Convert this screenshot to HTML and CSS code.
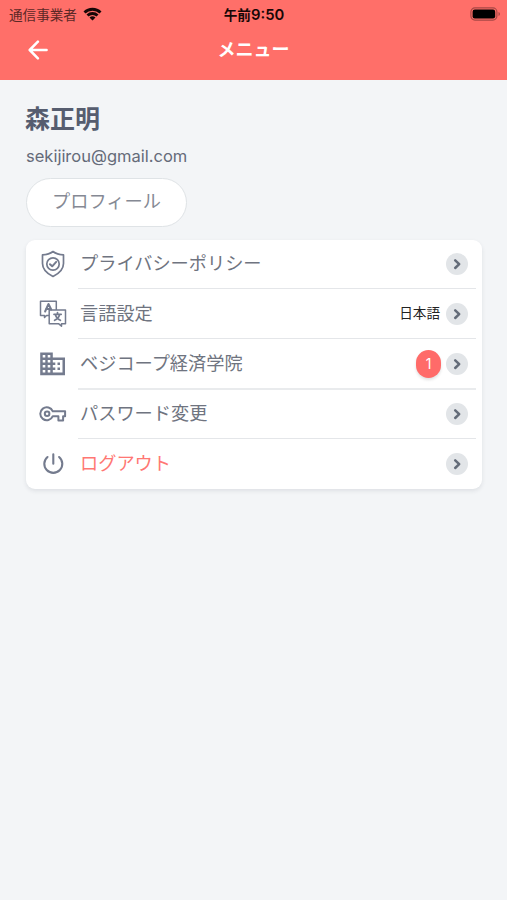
FILE: index.html
```html
<!DOCTYPE html>
<html lang="ja">
<head>
<meta charset="utf-8">
<title>メニュー</title>
<link rel="stylesheet" href="styles.css">
</head>
<body>
<header class="header">
  <div class="status">
    <div class="carrier"><span>通信事業者</span>
      <svg class="wifi" viewBox="0 0 19 14"><path d="M.5 4.400a12.800 12.800 0 0 1 18 0l-2 2.200a9.900 9.900 0 0 0-14 0zM3.500 7.500a8.500 8.500 0 0 1 12 0l-2 2.100a5.700 5.700 0 0 0-8 0zM6.500 10.600a4.300 4.300 0 0 1 6 0l-3 3z"/></svg>
    </div>
    <div class="time">午前<span class="digits">9:50</span></div>
    <svg class="battery" viewBox="0 0 31 14"><rect x=".9" y=".9" width="26" height="12.2" rx="4" fill="none" stroke="#a84845" stroke-width="1.2"/><rect x="2.6" y="2.6" width="22.6" height="8.8" rx="2.2"/><path d="M28.5 5v4c2-.8 2-3.2 0-4z" fill="#a84845"/></svg>
  </div>
  <div class="bar">
    <svg class="back" viewBox="0 0 20 20"><path d="M18.600 10H2M9.900 1.700 1.700 10l8.200 8.300"/></svg>
    <h1 class="title">メニュー</h1>
  </div>
</header>
<main class="main">
  <h2 class="name">森正明</h2>
  <p class="email">sekijirou@gmail.com</p>
  <button class="profile">プロフィール</button>
  <ul class="menu">
    <li class="item">
      <svg class="icon" viewBox="0 0 28 28" stroke-width="1.700"><path d="M14 1.500c3 2.300 6.500 3.200 10.500 3.400v8.600c0 6-4.400 10-10.500 13-6.100-3-10.500-7-10.500-13V4.900C7.500 4.700 11 3.800 14 1.500z"/><circle cx="14" cy="14" r="6.200"/><path d="m11 14.200 2.200 2.100 4-4.400" stroke-width="2"/></svg>
      <div class="row"><span class="label">プライバシーポリシー</span><span class="chevron"><svg viewBox="0 0 22 22"><path d="m9.200 7.400 4 3.800-4 3.800"/></svg></span></div>
    </li>
    <li class="item">
      <svg class="icon" viewBox="0 0 28 28" stroke-width="1.500"><path d="M10 15.500H7.500l-2 2v-2H1.500V1.200h15.800v8.700M10.200 9.900h16.300v13.800h-4v2.500l-3-2.500h-9.300z"/><path d="m6.100 11.500 3.400-7.500 2.700 5.500M7 9h4.500" stroke-width="2"/><path d="M15 14.300h7.200M18.500 12.500v2M20.600 14.500c-.7 3-2.600 4.800-5 5.800M16.400 14.500c.7 3 2.600 4.800 5 5.800" stroke-width="1.700"/></svg>
      <div class="row"><span class="label">言語設定</span><span class="value">日本語</span><span class="chevron"><svg viewBox="0 0 22 22"><path d="m9.200 7.400 4 3.800-4 3.800"/></svg></span></div>
    </li>
    <li class="item thick">
      <svg class="icon" viewBox="0 0 28 28" stroke-width="0"><path fill="#747b8e" fill-rule="evenodd" d="M1.200 2.600h12.600v5H26v17.600H1.200zM3.700 5.100v2.500h2.600V5.100zm5 0v2.500h2.600V5.100zM3.700 10.100v2.500h2.600v-2.500zm5 0v2.500h2.600v-2.500zM3.700 15.100v2.500h2.600v-2.500zm5 0v2.500h2.600v-2.500zM3.700 20.100v2.500h2.600v-2.500zm5 0v2.500h2.600v-2.500zM13.800 10.100v2.500h2.500v2.500h-2.500v2.500h2.500v2.500h-2.500v2.500h9.700V10.100z"/><path fill="#747b8e" d="M18.500 12.600H21v2.500h-2.500zM18.500 17.600H21v2.500h-2.500z"/></svg>
      <div class="row"><span class="label">ベジコープ経済学院</span><span class="badge">1</span><span class="chevron"><svg viewBox="0 0 22 22"><path d="m9.200 7.400 4 3.800-4 3.800"/></svg></span></div>
    </li>
    <li class="item">
      <svg class="icon" viewBox="0 0 28 28" stroke-width="2"><path d="M13.800 11.300h12.300v4.900h-2v4.400h-4.700v-4.400h-5.600a6.500 6.500 0 1 1 0-4.900z"/><circle cx="8.100" cy="13.800" r="2.300"/></svg>
      <div class="row"><span class="label">パスワード変更</span><span class="chevron"><svg viewBox="0 0 22 22"><path d="m9.200 7.400 4 3.800-4 3.800"/></svg></span></div>
    </li>
    <li class="item">
      <svg class="icon" viewBox="0 0 28 28" stroke-width="2.100"><path d="M14.300 4.300v9.500M8.500 7a9 9 0 1 0 11.600 0"/></svg>
      <div class="row"><span class="label logout">ログアウト</span><span class="chevron"><svg viewBox="0 0 22 22"><path d="m9.200 7.400 4 3.800-4 3.800"/></svg></span></div>
    </li>
  </ul>
</main>
</body>
</html>
```
FILE: styles.css
```css
* { box-sizing: border-box; }
body {
  margin: 0;
  min-height: 900px;
  background: #f3f5f7;
  color: #747986;
  font-family: Inter, "Noto Sans CJK JP", sans-serif;
}
svg { display: block; flex: none; }
.header { height: 80px; background: #ff6f69; }
.status {
  display: grid;
  grid-template-columns: 1fr auto 1fr;
  align-items: center;
  height: 27px;
  padding: 0 6px 0 7px;
  color: #170706;
}
.carrier { display: flex; align-items: center; gap: 6px; padding: 1px 0 0 2px; font-size: 13.6px; line-height: 27px; color: #5c2826; }
.wifi { width: 19px; height: 14px; margin-top: -3px; fill: #170706; }
.time { padding-top: 2px; font-size: 13.6px; font-weight: 700; line-height: 27px; }
.digits { font-weight: 600; font-size: 14.8px; }
.battery { width: 31px; height: 14px; margin-top: -1px; justify-self: end; }
.bar {
  display: grid;
  grid-template-columns: 1fr auto 1fr;
  align-items: center;
  height: 44px;
  padding: 0 28px;
}
.back { width: 20px; height: 20px; margin-top: 2px; fill: none; stroke: #fff; stroke-width: 2.5; stroke-linecap: round; stroke-linejoin: round; }
.title { margin: 0; padding-top: 1px; color: #fff; font-size: 18px; font-weight: 700; line-height: 43px; }
.main { padding: 21px 25px 0 26px; }
.name { margin: 0 0 0 -1px; color: #565d6f; font-size: 25px; font-weight: 700; line-height: 36px; }
.email { margin: 7px 0 0; font-size: 16.5px; line-height: 24px; color: #656b79; }
.profile {
  display: block;
  width: 161px;
  height: 49px;
  margin: 10px 0 0;
  padding: 0 0 3px;
  border: 1px solid #dfe3e6;
  border-radius: 25px;
  background: #fff;
  color: #858994;
  font: 18.2px/44px Inter, "Noto Sans CJK JP", sans-serif;
}
.menu {
  margin: 13px 0 0;
  padding: 0;
  list-style: none;
  background: #fff;
  border-radius: 9px;
  box-shadow: 0 2px 4px rgba(40, 50, 70, .1);
}
.item { display: flex; height: 50px; padding: 0 6px 0 13px; }
.icon { width: 28px; height: 28px; margin-top: 10px; fill: none; stroke: #747b8e; stroke-linecap: round; stroke-linejoin: round; }
.row {
  display: flex;
  align-items: center;
  flex: 1;
  height: 49px;
  margin-left: 11px;
  padding: 0 8px 0 2px;
  border-bottom: 1px solid #e4e6e9;
}
.thick .row { height: 50px; border-bottom: 2px solid #e9ebed; }
.item:last-child { height: 49px; }
.item:last-child .row { border-bottom: 0; padding-bottom: 1px; }
.label { flex: 1; color: #6f7480; font-size: 18.2px; line-height: 44px; margin-top: -2px; }
.logout { color: #ff7773; }
.value { margin-right: 6px; color: #222; font-size: 13.6px; margin-top: -4px; }
.badge {
  width: 25px;
  height: 28px;
  margin-right: 5px;
  border-radius: 13px;
  background: #ff6b69;
  box-shadow: 0 2px 3px rgba(0, 0, 0, .12);
  color: #fff;
  font-size: 14px;
  line-height: 28px;
  text-align: center;
}
.chevron { width: 22px; height: 22px; border-radius: 50%; background: #e2e5e8; }
.chevron path { fill: none; stroke: #646c79; stroke-width: 2.5; stroke-linecap: round; stroke-linejoin: round; }
```
